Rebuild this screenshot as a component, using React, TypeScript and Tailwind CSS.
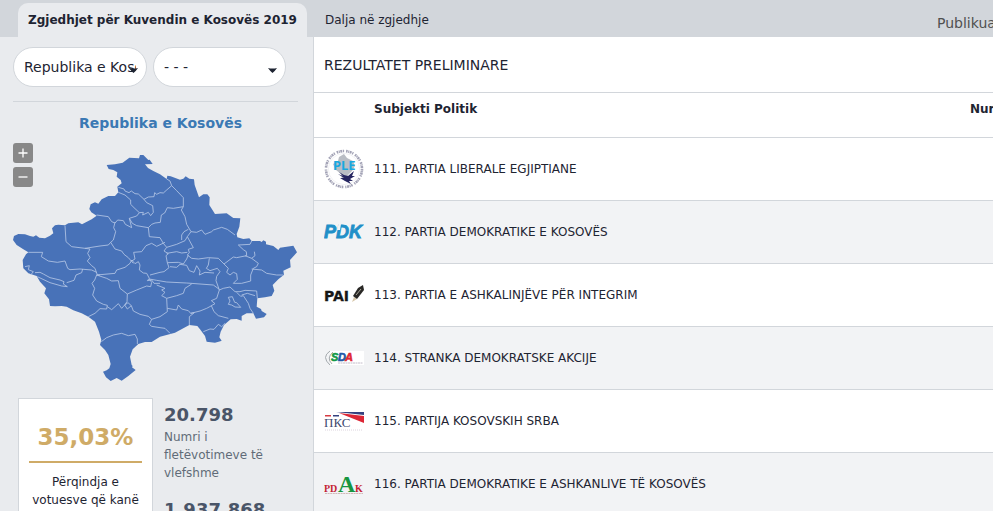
import type { ReactNode } from 'react';

type Party = {
  number: number;
  name: string;
  logo: ReactNode;
};

const MAP_OUTLINE =
  'M39 315 42 303 55 297 75 298 90 303 100 305 108 301 118 308 135 310 150 302 160 295 156 280 165 271 175 269 195 271 205 265 235 262 246 268 275 253 290 242 274 232 268 222 272 208 285 202 295 206 305 193 325 183 345 183 355 172 352 155 365 145 362 135 350 125 352 112 340 105 326 102 320 90 345 88 368 83 388 68 417 70 420 60 430 60 445 75 449 74 458 87 435 88 444 99 460 108 480 118 500 132 502 122 512 124 540 134 550 131 557 124 568 131 582 133 584 150 597 187 610 178 622 178 629 187 628 210 645 237 680 235 700 249 721 250 718 275 710 297 712 307 730 312 748 310 755 318 780 318 785 321 790 316 798 320 798 328 820 333 835 345 840 338 880 332 891 352 870 375 872 397 850 407 852 419 835 433 818 450 823 467 815 483 795 487 772 490 770 515 783 522 785 528 800 537 792 547 768 551 760 535 740 535 725 543 725 557 710 552 692 553 672 570 662 590 658 607 665 617 661 619 645 623 620 620 615 603 600 583 592 573 568 570 525 593 480 605 455 621 435 621 415 627 398 643 390 665 395 690 398 693 396 697 407 705 385 723 365 737 350 729 332 738 318 727 309 710 320 706 328 700 332 687 325 660 315 645 300 630 304 615 297 590 285 560 265 545 245 535 220 526 200 515 185 513 165 514 150 513 147 493 133 475 138 460 120 440 110 423 85 415 70 400 68 375 78 358 85 352 70 343 50 330Z';

const MAP_BORDERS = [
  'M355 157 372 162 375 168 387 173 394 168 405 176 415 177 432 193 445 186 462 185 464 173 470 178 480 173 490 174 500 165 515 152 510 138 500 132',
  'M515 152 530 167 550 188 550 215 544 225 555 245 560 268 573 290',
  'M355 172 375 180 392 195 392 208 402 218 418 233 430 232 428 240 445 232 452 242 460 232 458 212 440 203 432 193',
  'M418 233 410 243 388 250 397 265 410 272 445 278 455 268 465 264 481 262 484 240 494 234 502 218 520 220 550 215',
  'M290 240 325 245 335 260 345 264 353 255 370 257 376 268 395 278 388 250',
  'M345 262 341 278 347 290 340 315 332 322 345 342 365 348 372 358 385 368 400 385',
  'M195 272 198 320 215 335 255 340 300 333 325 330 332 322',
  'M85 352 128 352 124 365 145 378 172 382 195 378 203 400 210 404 240 402 275 405 290 412',
  'M255 340 270 342 263 355 270 368 262 378 275 392 285 400 292 420 300 420',
  'M445 278 448 305 480 308 490 325 500 337 530 328 555 317 562 305',
  'M545 315 545 300 552 290 565 283',
  'M395 378 405 372 401 352 425 350 438 332 455 325 470 334 495 322',
  'M573 290 590 292 605 285 615 298 635 290 640 285 665 277 682 283 705 300',
  'M573 290 562 305 580 338 565 343 568 353 562 360 575 370 595 372 625 368 655 370 672 387 700 366 710 368 740 362 739 350 730 344 715 330 750 328 755 318',
  'M500 337 492 348 505 356 498 362 502 383 535 382 550 387 560 372 565 360M500 355 530 350 545 354 562 352',
  'M735 362 755 370 765 362 763 350M755 370 775 385 770 395 760 400 752 420M755 402 785 405 800 415 830 420 850 420',
  'M628 370 625 390 619 400 630 407 652 400 660 410 650 424 648 437 658 465 650 490 634 497 645 506 634 512 642 530 655 542 685 550',
  'M450 420 480 412 492 410 507 398 502 383M510 395 530 397 540 388 560 391 568 407 582 412 590 392 600 408 598 420 615 412 642 414',
  'M290 420 345 415 350 405 375 397 390 385 395 375 405 386 415 380 420 390 418 405 430 414 440 415 448 430 442 437 455 435 462 445 480 445',
  'M290 420 320 430 335 438 355 437 360 460 382 477 381 500 374 510 382 522 394 512 384 503 374 510',
  'M382 477 410 465 440 453 452 455 455 442 448 432 470 436 500 441 560 444 640 450 658 463',
  'M290 420 284 435 276 445 284 460 278 480 290 498 310 508 322 511 320 522 300 521 285 535 265 545',
  'M322 515 335 524 355 506 365 520 374 510',
  'M394 512 400 528 420 538 445 544 455 553 448 568 455 574 480 578 495 580 510 595',
  'M455 553 480 545 502 530 500 490 485 482 495 472 485 465 495 460 470 450',
  'M500 490 530 482 550 475 555 460 575 447',
  'M502 520 530 525 535 510 545 522 565 527 572 535 583 533 568 545 568 570M572 535 600 528 620 520 635 512',
  'M685 487 697 485 704 502 710 503 722 517 705 516 695 510 685 508 690 498Z',
  'M658 465 670 460 690 456 705 470 720 470 735 466 770 468 772 490M710 472 722 484 730 482 745 505 750 520 760 535M725 480 742 475 765 482',
  'M672 387 685 400 680 412 690 420 700 412 710 416 712 433 700 445 725 445 752 438 752 420',
  'M304 620 320 608 340 600 365 595 385 602 405 598 412 612 412 627',
  'M610 590 630 582 642 583 655 568 665 575 675 565',
  'M75 395 88 392 85 404 100 410 92 420M105 413 120 412 130 417 150 428 180 435 192 440 190 447 202 455 185 453 150 443 112 425M200 443 222 436 228 420 245 413 248 402',
];

const PARTIES: Party[] = [
  {
    number: 111,
    name: 'PARTIA LIBERALE EGJIPTIANE',
    logo: (
      <svg viewBox="0 0 40 40" className="w-full">
        <circle cx="20" cy="20" r="19.500" fill="#fff" />
        <circle cx="20" cy="20" r="18" fill="none" stroke="#a3a3b6" strokeWidth="2.600" strokeDasharray="1.600 .6 1 .5 2 .7 1.200 2" />
        <circle cx="20" cy="20" r="15.600" fill="none" stroke="#e4e4ea" strokeWidth=".5" />
        <path d="M15 8 20 5 23 9 29 12 31 17 28 22 24 26 22 31 18 30 17 25 12 21 9 15 14 12Z" fill="#b9bdc4" />
        <text x="9" y="21" fontSize="13" fontWeight="bold" fill="#18a8e0" fontFamily="Noto Sans, sans-serif">PLE</text>
        <path d="M15 23 20 26 24 27 30 22 28 27 31 27 26 30 29 32 25 32 27 35 21 32 16 29 20 29 14 25 19 27Z" fill="#252560" />
      </svg>
    ),
  },
  {
    number: 112,
    name: 'PARTIA DEMOKRATIKE E KOSOVËS',
    logo: (
      <svg viewBox="0 0 40 20" className="w-full">
        <text
          x="0"
          y="16"
          fontSize="18"
          fontWeight="bold"
          fontStyle="italic"
          fontFamily="Liberation Sans, Arial, sans-serif"
          fill="#218fc8"
          stroke="#218fc8"
          strokeWidth=".8"
        >
          PDK
        </text>
        <path d="M14.500 2 17 2 16 8 13 8Z" fill="#f2f3f5" />
      </svg>
    ),
  },
  {
    number: 113,
    name: 'PARTIA E ASHKALINJËVE PËR INTEGRIM',
    logo: (
      <svg viewBox="0 0 40 20" className="w-full">
        <text x="0" y="16" fontSize="14" fontWeight="bold" fill="#171717" stroke="#171717" strokeWidth=".3">
          PAI
        </text>
        <path d="M28 17 30 12 33 14Z" fill="#d7c7aa" />
        <path d="M29 11 34 3 39 0 40 5 33 14Z" fill="#292826" />
        <path d="M32 10 37 4" stroke="#aaa497" strokeWidth="1" />
      </svg>
    ),
  },
  {
    number: 114,
    name: 'STRANKA DEMOKRATSKE AKCIJE',
    logo: (
      <svg viewBox="0 0 40 16" className="w-full">
        <path d="M6 1H40V15H6Z" fill="#fff" />
        <path d="M6 1Q-3 7 6 15M9 2Q2 8 8 14" fill="none" stroke="#a4a9ad" strokeWidth="1" />
        <g fontSize="11" fontWeight="bold" fontStyle="italic" strokeWidth=".6" fontFamily="Liberation Sans, Arial, sans-serif">
          <text x="7" y="11" fill="#159846" stroke="#159846">S</text>
          <text x="14" y="11" fill="#2256a5" stroke="#2256a5">D</text>
          <text x="21" y="11" fill="#df2632" stroke="#df2632">A</text>
        </g>
        <path d="M14 13H39" stroke="#b4abbc" strokeWidth=".8" strokeDasharray="2 .5" />
      </svg>
    ),
  },
  {
    number: 115,
    name: 'PARTIJA KOSOVSKIH SRBA',
    logo: (
      <svg viewBox="0 0 40 20" className="w-full">
        <path d="M1 4H7V5.500H1Z" fill="#d63b42" />
        <path d="M9 4H15V5.500H9Z" fill="#34417f" />
        <path d="M12 1 40 1V4Z" fill="#34417f" />
        <path d="M15 2 40 5V12Z" fill="#dc2635" />
        <text x="0" y="16" fontSize="13" fill="#42496f" fontFamily="Liberation Serif, Times New Roman, serif">ПКС</text>
        <path d="M1 19H39" stroke="#dcd4de" strokeWidth="1" strokeDasharray="1 1" />
      </svg>
    ),
  },
  {
    number: 116,
    name: 'PARTIA DEMOKRATIKE E ASHKANLIVE TË KOSOVËS',
    logo: (
      <svg viewBox="0 0 40 20" className="w-full">
        <g fontWeight="bold" fontFamily="Liberation Serif, Times New Roman, serif">
          <text x="0" y="18" fontSize="10" fill="#c41e34">PD</text>
          <text x="14" y="18" fontSize="24" fill="#17963f">A</text>
          <text x="31" y="18" fontSize="10" fill="#c41e34">K</text>
        </g>
        <path d="M1 19.500H39" stroke="#c9a8a8" strokeWidth=".8" strokeDasharray="2 .6" />
      </svg>
    ),
  },
];

function PillSelect({ label, value, className }: { label: string; value: string; className: string }) {
  return (
    <div className={`relative h-10 ${className}`}>
      <select
        aria-label={label}
        className="h-full w-full appearance-none overflow-hidden rounded-full border border-[#d2d6db] bg-white px-2.5 text-sm text-[#1e2432]"
      >
        <option>{value}</option>
      </select>
      <svg viewBox="0 0 9 5" className="pointer-events-none absolute right-[9px] top-[21px] w-[9px]" fill="#1e2432">
        <path d="M0 0Q4.500 1 9 0Q7 3 4.500 5Q2 3 0 0Z" />
      </svg>
    </div>
  );
}

function ZoomButton({ label, path }: { label: string; path: string }) {
  return (
    <button aria-label={label} className="flex h-5 w-5 items-center justify-center rounded-[3px] bg-[#888888]">
      <svg viewBox="0 0 10 10" className="w-2.5" stroke="#fff" strokeWidth="1.300">
        <path d={path} />
      </svg>
    </button>
  );
}

function KosovoMap() {
  return (
    <svg viewBox="39 57 855 684" className="w-full" role="img" aria-label="Republika e Kosovës">
      <path d={MAP_OUTLINE} fill="#4872b8" />
      <g fill="none" stroke="#b4c6e6" strokeWidth="2.500" strokeLinejoin="round">
        {MAP_BORDERS.map((d) => (
          <path key={d} d={d} />
        ))}
      </g>
    </svg>
  );
}

function Sidebar() {
  return (
    <aside className="w-[314px] shrink-0 border-r border-[#d2d6db] pl-[13px] pr-[15px] pt-2.5">
      <div className="flex gap-1.5 border-b border-[#d2d6db] pb-3.5">
        <PillSelect label="Komuna" value="Republika e Kosovës" className="w-[134px]" />
        <PillSelect label="Qendra e votimit" value="- - -" className="w-[133px]" />
      </div>
      <h2 className="mt-[11px] pl-2.5 text-center text-sm leading-5 font-bold text-[#3b79b4]">Republika e Kosovës</h2>

      {/* Harta */}
      <div className="relative pt-[21px]">
        <KosovoMap />
        <div className="absolute left-0 top-2.5 flex flex-col gap-1">
          <ZoomButton label="Zmadho" path="M5 0.500V9.500M0.500 5H9.500" />
          <ZoomButton label="Zvogëlo" path="M0.500 5H9.500" />
        </div>
      </div>

      {/* Statistikat */}
      <div className="mt-4 flex gap-[11px] pl-[5px]">
        <div className="w-[135px] shrink-0 border border-[#d2d6db] bg-white px-2.5 pt-[22px] text-center text-xs text-[#1e2432]">
          <p className="border-b-2 border-[#cfab67] pb-2 text-[23px] leading-8 font-bold text-[#cfab67]">35,03%</p>
          <p className="mt-2.5 leading-[18px]">Përqindja e votuesve që kanë</p>
        </div>
        <div className="w-28 pt-[7px] text-xs leading-[18px] text-[#616b78]">
          <p className="text-lg leading-5 font-bold text-[#4a5568]">20.798</p>
          <p className="mt-[3px]">Numri i fletëvotimeve të vlefshme</p>
          <p className="mt-[18px] text-lg leading-5 font-bold text-[#4a5568]">1.937.868</p>
        </div>
      </div>
    </aside>
  );
}

function Results() {
  return (
    <main className="min-w-0 flex-1 bg-white text-[#1e2432]">
      <h1 className="border-b border-[#d2d6db] px-2.5 pt-[18px] pb-[17px] text-sm leading-5">REZULTATET PRELIMINARE</h1>
      <table className="w-full table-fixed text-xs">
        <thead>
          <tr className="h-11 border-b border-[#d2d6db] text-left align-top">
            <th className="w-[60px]" aria-label="Logo" />
            <th className="pt-[7px] leading-[18px]">Subjekti Politik</th>
            <th className="w-[23px] overflow-hidden pt-[7px] leading-[18px] whitespace-nowrap">Numri</th>
          </tr>
        </thead>
        <tbody>
          {PARTIES.map((party) => (
            <tr key={party.number} className="h-[63px] border-b border-[#d2d6db] even:bg-[#f2f3f5]">
              <td className="pl-2.5 pr-2.5">{party.logo}</td>
              <td>
                {party.number}. {party.name}
              </td>
              <td />
            </tr>
          ))}
        </tbody>
      </table>
    </main>
  );
}

export default function App() {
  return (
    <div className="flex h-screen flex-col overflow-hidden bg-[#e9ebee] font-['DejaVu_Sans',Verdana,sans-serif]">
      <nav className="flex h-[37px] shrink-0 items-end bg-[#d2d6db] pl-[18px] text-xs text-[#1e2432]">
        <a href="#" className="rounded-t-[10px] bg-[#e9ebee] px-2.5 pt-2 pb-2 leading-[18px] font-bold whitespace-nowrap">
          Zgjedhjet për Kuvendin e Kosovës 2019
        </a>
        <a href="#" className="ml-[18px] pb-2 leading-[18px]">
          Dalja në zgjedhje
        </a>
        <span className="ml-auto w-14 overflow-hidden pb-1 text-sm leading-5 whitespace-nowrap text-[#505050]">Publikuar</span>
      </nav>
      <div className="flex min-h-0 flex-1 overflow-hidden">
        <Sidebar />
        <Results />
      </div>
    </div>
  );
}
